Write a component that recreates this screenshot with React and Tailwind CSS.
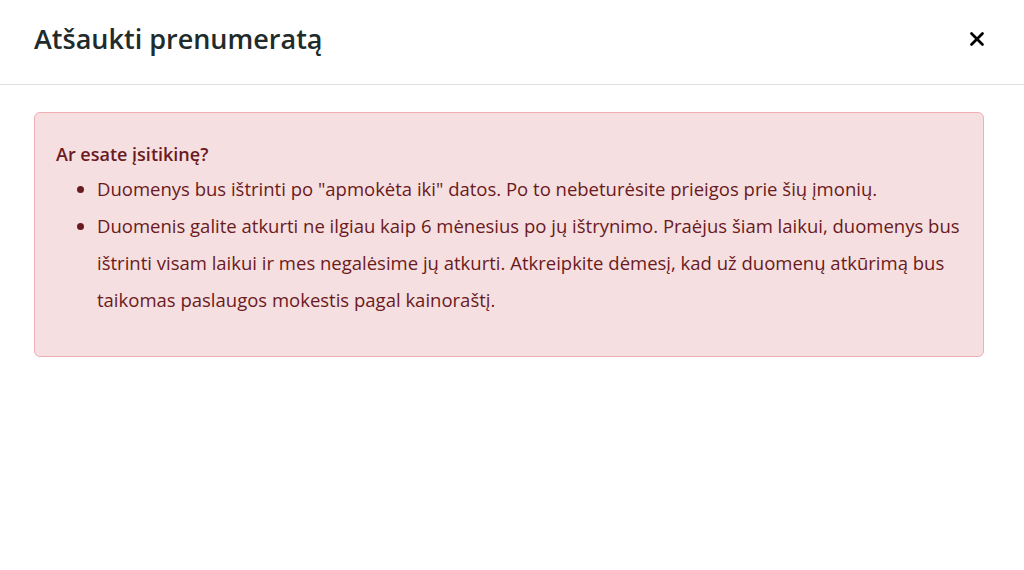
import { X } from 'lucide-react';

const font = { fontFamily: '"Open Sans", "Noto Sans", sans-serif' };

export default function App() {
  return (
    <div className="min-h-screen bg-white" style={font}>
      {/* Modal header */}
      <div className="flex h-[85px] items-center justify-between border-b border-[#dee2e6] pb-[6px] pl-[34px] pr-[36px]">
        <h1 className="text-[27px] font-semibold text-[#212b2b]">Atšaukti prenumeratą</h1>
        <button className="text-black">
          <X size={22} strokeWidth={3} />
        </button>
      </div>

      {/* Body */}
      <div className="pl-[34px] pr-[40px] pt-[27px]">
        <div className="rounded-md border border-[#f1aeb5] bg-[#f6dfe0] px-[21px] pb-[38px] pt-[28px] text-[18.5px] text-[#6a1a21]">
          <p className="text-[18px] font-semibold leading-[27px]">Ar esate įsitikinę?</p>
          <ul className="mt-[2px] list-disc pl-[41px] leading-[37px]">
            <li>Duomenys bus ištrinti po "apmokėta iki" datos. Po to nebeturėsite prieigos prie šių įmonių.</li>
            <li>
              Duomenis galite atkurti ne ilgiau kaip 6 mėnesius po jų ištrynimo. Praėjus šiam laikui, duomenys bus
              ištrinti visam laikui ir mes negalėsime jų atkurti. Atkreipkite dėmesį, kad už duomenų atkūrimą bus
              taikomas paslaugos mokestis pagal kainoraštį.
            </li>
          </ul>
        </div>
      </div>
    </div>
  );
}
